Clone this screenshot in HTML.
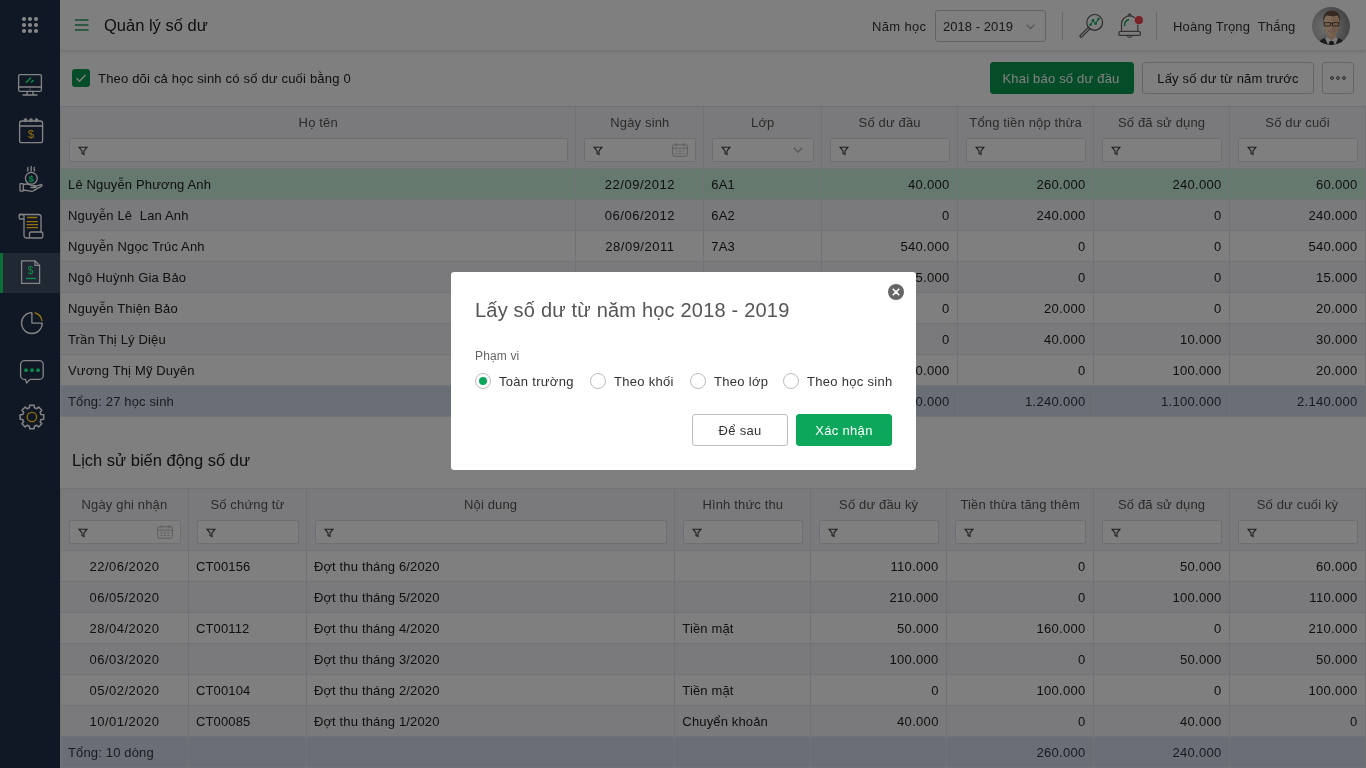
<!DOCTYPE html>
<html lang="vi">
<head>
<meta charset="utf-8">
<title>Quản lý số dư</title>
<style>
*{box-sizing:border-box;margin:0;padding:0}
html,body{width:1366px;height:768px;overflow:hidden}
body{font-family:"Liberation Sans",sans-serif;font-size:13px;color:#212121;background:#fefefe;position:relative;letter-spacing:.15px}
#side{position:absolute;left:0;top:0;width:60px;height:768px;background:#111825;z-index:50}
#side svg{position:absolute;left:0;top:0}
#side .act{position:absolute;left:0;top:253px;width:60px;height:40px;background:#202834}
#side .act:before{content:"";position:absolute;left:0;top:0;width:3px;height:40px;background:#0a6e37}
#hdr{position:absolute;left:60px;top:0;width:1306px;height:50px;background:#fff;box-shadow:0 1px 4px rgba(0,0,0,.18);z-index:5}
#hdr .ttl{position:absolute;left:44px;top:14px;font-size:16.5px;line-height:22px;color:#212121;letter-spacing:0}
#tool{position:absolute;left:60px;top:50px;width:1306px;height:56px;background:#fff}
.cb{position:absolute;left:12px;top:19px;width:18px;height:18px;border-radius:3px;background:#0b9b53}
.cbl{position:absolute;left:38px;top:20px;line-height:18px;letter-spacing:.19px}
.btn{position:absolute;top:12px;height:32px;line-height:31.500px;border-radius:3px;border:1px solid #c9ccd3;background:#fff;text-align:center;color:#212121}
.btn.g{background:#0b9b53;border-color:#0b9b53;color:#fff;text-indent:-2px;letter-spacing:.2px}
table{border-collapse:collapse;table-layout:fixed;position:absolute;left:60px}
th,td{border:1px solid #e3e5eb;height:31px;padding:0 8px 0 7px;white-space:nowrap;overflow:hidden;font-weight:400;text-align:left}
th{background:#f4f5f8;height:62px;vertical-align:top;text-align:center;color:#555;padding:8px 8px 0;position:relative}
td.r{text-align:right;letter-spacing:.3px;padding-right:7.500px}td.c{text-align:center;letter-spacing:.5px;padding:0 8px}
tr.sel td{background:#cdf2df}
tr.alt td{background:#f4f5f8}
tr.tot td{background:#d3dcee;color:#34373d}
th i{position:absolute;left:8px;right:7px;top:31px;height:24px;border:1px solid #dcdee4;background:#fff;border-radius:2px}
#sec2{position:absolute;left:60px;top:432px;width:1306px;height:336px;background:#fff}
#sec2 .st{position:absolute;left:12px;top:17px;font-size:16.5px;line-height:22px;letter-spacing:0}
svg.fn{position:absolute;left:8px;top:6.500px;width:10px;height:10px;fill:none;stroke:#3c3c3c;stroke-width:1.100}
svg.cal{position:absolute;right:7px;top:3.500px;width:16px;height:14px;fill:none;stroke:#bbb;stroke-width:1}
svg.chv{position:absolute;right:10px;top:8px;width:10px;height:6px;fill:none;stroke:#b8b8b8;stroke-width:1.600}
#ov{position:absolute;left:0;top:0;width:1366px;height:768px;background:rgba(0,0,0,.5);z-index:20}
#dlg{position:absolute;left:451px;top:272px;width:465px;height:198px;background:#fff;border-radius:3px;z-index:30;color:#444}
#dlg .dt{position:absolute;left:24px;top:24px;font-size:20px;line-height:28px;color:#555;letter-spacing:.2px}
#dlg .cls{position:absolute;left:437px;top:12px;width:16px;height:16px}
#dlg .lb{position:absolute;left:24px;top:76px;font-size:12px;line-height:16px;color:#666}
#dlg .rd{position:absolute;top:101px;width:16px;height:16px;border-radius:50%;border:1px solid #bdbdbd;background:#fff}
#dlg .rd.on:after{content:"";position:absolute;left:3px;top:3px;width:8px;height:8px;border-radius:50%;background:#0da75b}
#dlg .rl{position:absolute;top:101px;line-height:18px;color:#333;letter-spacing:.3px}
#dlg .db{position:absolute;top:142px;width:96px;height:32px;line-height:31px;text-align:center;border:1px solid #bdbdbd;border-radius:3px;background:#fff;color:#333;letter-spacing:.3px}
#dlg .db.g{background:#0da75b;border-color:#0da75b;color:#fff}
#hdr .hb{position:absolute;left:15px;top:19px;width:14px;height:12px}
#hdr .ny{position:absolute;left:812px;top:17px;line-height:20px;letter-spacing:.35px;color:#333}
#hdr .sl{position:absolute;left:875px;top:10px;width:111px;height:32px;border:1px solid #c6c6c8;border-radius:3px;line-height:32px;padding-left:7px;color:#333;letter-spacing:.05px}
#hdr .sl svg{position:absolute;right:10px;top:12.500px;width:9px;height:5.500px;fill:none;stroke:#b0b0b0;stroke-width:1.500}
#hdr .sp{position:absolute;top:12px;width:1px;height:28px;background:#d0d0d0}
#hdr .ic1{position:absolute;left:1018px;top:12px;width:26px;height:26px}
#hdr .ic2{position:absolute;left:1056px;top:11px;width:26px;height:28px}
#hdr .un{position:absolute;left:1113px;top:17px;line-height:20px;letter-spacing:.18px;color:#333}
#hdr .av{position:absolute;left:1252px;top:7px;width:38px;height:38px}
.cb svg{position:absolute;left:0;top:0;width:18px;height:18px}
svg{overflow:visible}
body>*{will-change:transform}
</style>
</head>
<body>
<div id="side"><div class="act"></div><svg width="60" height="768" viewBox="0 0 60 768" fill="none" stroke="#858585" stroke-width="1.300" stroke-linejoin="round" stroke-linecap="round">
<g fill="#878787" stroke="none"><circle cx="24" cy="19" r="2.100"/><circle cx="30" cy="19" r="2.100"/><circle cx="36" cy="19" r="2.100"/><circle cx="24" cy="25" r="2.100"/><circle cx="30" cy="25" r="2.100"/><circle cx="36" cy="25" r="2.100"/><circle cx="24" cy="31" r="2.100"/><circle cx="30" cy="31" r="2.100"/><circle cx="36" cy="31" r="2.100"/></g>
<rect x="18.600" y="74.600" width="22.800" height="16.800" rx="1.500"/><path d="M18.600 87h22.800M27.600 91.400l-1 3.500M32.400 91.400l1 3.500M23 95h14"/><circle cx="30" cy="89.200" r=".600" fill="#858585" stroke="none"/>
<path d="M26 82.800l5-5.200M31 82.500l2.600-2.400" stroke="#0a8c4a" stroke-width="1.500" stroke-linecap="butt"/>
<rect x="19.600" y="121" width="23" height="21.600" rx="2.200"/><path d="M19.600 126h23"/><circle cx="25.500" cy="120.300" r="1.300"/><circle cx="31" cy="120.300" r="1.300"/><circle cx="36.500" cy="120.300" r="1.300"/>
<text x="31" y="138" font-family="Liberation Sans,sans-serif" font-size="11.500" text-anchor="middle" fill="#94720f" stroke="none">$</text>
<path d="M27.800 167.500v3.600M31.200 166.400v4.800M34.300 167.500v3.600"/><circle cx="31.300" cy="178.300" r="5.900"/>
<text x="31.300" y="181.800" font-family="Liberation Sans,sans-serif" font-size="9.500" font-weight="700" text-anchor="middle" fill="#0a8c4a" stroke="none">$</text>
<rect x="20" y="183.600" width="3.300" height="7.600" rx=".500"/><path d="M23.300 184.600c2-.700 3.800-.900 5.600-.100l2.600 1.200h3.600c1.300 0 1.300 1.900 0 1.900h-4.300M33.500 187.200l7.200-2.600c1.200-.400 1.800.900.800 1.500l-8.200 4.800c-.800.400-1.600.500-2.600.300l-7.400-1.200"/>
<path d="M24 219v16.500a2.500 2.500 0 0 0 2.500 2.500h3M19.200 214.500h19.300a2.500 2.500 0 0 1 2.500 2.500v15"/><rect x="19.200" y="214.500" width="4.800" height="4.500" rx="1"/><rect x="29.500" y="232" width="13.300" height="6" rx="1.500"/>
<path d="M27.200 217.500h10M26.600 221.600h11.400M26.600 224.600h11.400M26.600 227.600h11.400" stroke="#94720f" stroke-linecap="butt"/>
<path d="M21.600 260.800h13.400l4.600 4.600v18h-18zM35 260.800v4.600h4.600"/>
<text x="30.600" y="274.300" font-family="Liberation Sans,sans-serif" font-size="10.500" text-anchor="middle" fill="#0a8c4a" stroke="none">$</text>
<path d="M26 278.500h10" stroke="#0a8c4a" stroke-linecap="butt"/>
<path d="M31.900 312.700a10.400 10.400 0 1 0 10.400 10.400h-10.400z"/><path d="M35.200 313a9.300 9.300 0 0 1 6.700 7.500" stroke="#94720f"/>
<path d="M24.600 360.600h14.600a4 4 0 0 1 4 4v10.800a4 4 0 0 1-4 4h-9.200l-3.400 3.600-1-3.600h-1a4 4 0 0 1-4-4v-10.800a4 4 0 0 1 4-4z"/>
<g fill="#0a8c4a" stroke="none"><circle cx="26" cy="370.200" r="1.900"/><circle cx="32" cy="370.200" r="1.900"/><circle cx="38" cy="370.200" r="1.900"/></g>
<path d="M29.37 407.84L29.63 405.22 L34.17 405.22 L34.43 407.84A9.5 9.5 0 0 1 36.58 408.73L38.63 407.06 L41.84 410.27 L40.17 412.32A9.5 9.5 0 0 1 41.06 414.47L43.68 414.73 L43.68 419.27 L41.06 419.53A9.5 9.5 0 0 1 40.17 421.68L41.84 423.73 L38.63 426.94 L36.58 425.27A9.5 9.5 0 0 1 34.43 426.16L34.17 428.78 L29.63 428.78 L29.37 426.16A9.5 9.5 0 0 1 27.22 425.27L25.17 426.94 L21.96 423.73 L23.63 421.68A9.5 9.5 0 0 1 22.74 419.53L20.12 419.27 L20.12 414.73 L22.74 414.47A9.5 9.5 0 0 1 23.63 412.32L21.96 410.27 L25.17 407.06 L27.22 408.73A9.5 9.5 0 0 1 29.37 407.84Z" stroke-width="1.500"/><circle cx="31.900" cy="417" r="4.700" stroke="#94720f"/>
</svg></div>
<div id="hdr"><svg class="hb" viewBox="0 0 14 12"><path d="M0 1h13.5M0 6h13.5M0 11h13.5" stroke="#2a9a5e" stroke-width="1.6" fill="none"/></svg><div class="ttl">Quản lý số dư</div>
<div class="ny">Năm học</div>
<div class="sl">2018 - 2019<svg viewBox="0 0 10 6"><path d="M.7.7L5 5l4.3-4.3"/></svg></div>
<div class="sp" style="left:1002px"></div>
<svg class="ic1" viewBox="0 0 26 26"><circle cx="16.700" cy="10.400" r="7.900" fill="none" stroke="#555" stroke-width="1.200"/><path d="M10.300 15.300L2.300 23.300a1.100 1.100 0 0 0 1.600 1.600l8-8" fill="none" stroke="#555" stroke-width="1.200" stroke-linejoin="round"/><path d="M12.600 12.800l2.400-4.600 2.600 3.600 2.800-4.800" fill="none" stroke="#12a85c" stroke-width="1.100"/><circle cx="12.600" cy="12.800" r="1.200" fill="#12a85c"/><circle cx="15" cy="8.200" r="1.200" fill="#12a85c"/><circle cx="17.600" cy="11.800" r="1.200" fill="#12a85c"/><circle cx="20.400" cy="7" r="1.200" fill="#12a85c"/></svg>
<svg class="ic2" viewBox="0 0 26 28"><path d="M11.700 5.200L13.650 2.600l1.950 2.600" fill="none" stroke="#666" stroke-width="1.100" stroke-linejoin="round"/><path d="M5.500 20.400V13a8.150 8.150 0 0 1 16.300 0v7.400" fill="none" stroke="#666" stroke-width="1.200"/><rect x="2.800" y="20.400" width="21.700" height="4" rx="2" fill="none" stroke="#666" stroke-width="1.200"/><path d="M11.200 24.400a2.500 2.500 0 0 0 4.900 0" fill="none" stroke="#666" stroke-width="1.200"/><path d="M8.600 14.400c0-3 1.600-5 4-5.600" fill="none" stroke="#12a85c" stroke-width="1.400" stroke-linecap="round"/><circle cx="22.900" cy="9.200" r="4.800" fill="#fff"/><circle cx="22.900" cy="9.200" r="4.100" fill="#f2454f"/></svg>
<div class="sp" style="left:1096px"></div>
<div class="un">Hoàng Trọng &nbsp;Thắng</div>
<svg class="av" viewBox="0 0 38 38"><defs><clipPath id="avc"><circle cx="19" cy="19" r="19"/></clipPath><radialGradient id="avg" cx=".32" cy=".55" r=".75"><stop offset="0" stop-color="#d6d6d6"/><stop offset=".55" stop-color="#b0b0b0"/><stop offset="1" stop-color="#7e7e7e"/></radialGradient><filter id="avb" x="-10%" y="-10%" width="120%" height="120%"><feGaussianBlur stdDeviation=".55"/></filter></defs><g clip-path="url(#avc)"><rect width="38" height="38" fill="url(#avg)"/><g filter="url(#avb)"><path d="M6 38c.500-3.500 2.500-5.500 6.500-7l4-1.800h6l4 1.800c4 1.500 6 3.500 6.500 7z" fill="#3a3a3c"/><path d="M13 31.500l3.200-3h6.600l3.200 3-2.800 6.500h-7z" fill="#f4f4f4"/><path d="M17.300 34.800l2.200-1.300 2.200 1.300 1 3.200h-6.400z" fill="#3b3530"/><path d="M15.500 24h8v6.500l-4 2.800-4-2.800z" fill="#e9b898"/><path d="M11.600 14.500c0-5 3.200-7.500 7.800-7.500s8 2.500 8 7.500c0 2-.200 4.200-.800 6.500-.800 3.800-3.600 8.600-7.100 8.600s-6.300-4.800-7.100-8.600c-.600-2.300-.800-4.500-.800-6.500z" fill="#f6cfae"/><path d="M19.500 9c4 0 7.900 2 7.900 5.500 0 2-.200 4.200-.800 6.500-.800 3.800-3.600 8.600-7.100 8.600z" fill="#d9a582" opacity=".55"/><path d="M11.300 15.500c-.900-7.500 2.500-11.900 8.600-11.900 5.800 0 9.400 4.400 7.900 11.900-.300-3-1-5.200-2.200-6.900-3 .900-8.400.800-11.200-.300-1.600 1.800-2.600 4.200-3.100 7.200z" fill="#6a5242"/><path d="M12.300 15.600h6.200v3.400h-6.200zM20.500 15.600h6.200v3.400h-6.200zM18.500 16.600h2M11.400 16h1M26.700 16h1" fill="#d8b094" fill-opacity=".35" stroke="#3a2c24" stroke-width=".750"/><path d="M15.800 22.800c2 1.800 5.400 1.800 7.400 0-.800 2.800-6.600 2.800-7.400 0z" fill="#fff" stroke="#b07860" stroke-width=".4"/></g></g></svg>
</div>
<div id="tool"><div class="cb"><svg viewBox="0 0 18 18"><path d="M4.500 9.200l3 3 6-6.200" fill="none" stroke="#fff" stroke-width="1.500"/></svg></div><div class="cbl">Theo dõi cả học sinh có số dư cuối bằng 0</div>
<div class="btn g" style="left:930px;width:144px">Khai báo số dư đầu</div>
<div class="btn" style="left:1082px;width:172px">Lấy số dư từ năm trước</div>
<div class="btn" style="left:1262px;width:32px"><svg viewBox="0 0 16 4" style="width:16px;height:4px;position:absolute;left:7px;top:13px"><circle cx="2" cy="2" r="1.400" fill="none" stroke="#444" stroke-width="1"/><circle cx="8" cy="2" r="1.400" fill="none" stroke="#444" stroke-width="1"/><circle cx="14" cy="2" r="1.400" fill="none" stroke="#444" stroke-width="1"/></svg></div>
</div>
<table id="t1" style="top:106px"><colgroup><col style="width:516px"><col style="width:128px"><col style="width:118px"><col style="width:136px"><col style="width:136px"><col style="width:136px"><col style="width:136px"></colgroup>
<tr><th>Họ tên<i><svg class="fn" viewBox="0 0 10 10"><path d="M1 1.2h8L6 5v3.6L4 7.4V5z"/></svg></i></th><th>Ngày sinh<i><svg class="fn" viewBox="0 0 10 10"><path d="M1 1.2h8L6 5v3.6L4 7.4V5z"/></svg><svg class="cal" viewBox="0 0 16 14"><rect x=".6" y="1.8" width="14.8" height="11.4" rx="1.5"/><path d="M.6 5.2h14.8M4 .3v3M12 .3v3M3.5 8h2M7 8h2M10.5 8h2M3.5 10.5h2M7 10.5h2M10.5 10.5h2"/></svg></i></th><th>Lớp<i><svg class="fn" viewBox="0 0 10 10"><path d="M1 1.2h8L6 5v3.6L4 7.4V5z"/></svg><svg class="chv" viewBox="0 0 10 6"><path d="M.7.7L5 5l4.3-4.3"/></svg></i></th><th>Số dư đầu<i><svg class="fn" viewBox="0 0 10 10"><path d="M1 1.2h8L6 5v3.6L4 7.4V5z"/></svg></i></th><th>Tổng tiền nộp thừa<i><svg class="fn" viewBox="0 0 10 10"><path d="M1 1.2h8L6 5v3.6L4 7.4V5z"/></svg></i></th><th>Số đã sử dụng<i><svg class="fn" viewBox="0 0 10 10"><path d="M1 1.2h8L6 5v3.6L4 7.4V5z"/></svg></i></th><th>Số dư cuối<i><svg class="fn" viewBox="0 0 10 10"><path d="M1 1.2h8L6 5v3.6L4 7.4V5z"/></svg></i></th></tr>
<tr class="sel"><td>Lê Nguyễn Phương Anh</td><td class="c">22/09/2012</td><td>6A1</td><td class="r">40.000</td><td class="r">260.000</td><td class="r">240.000</td><td class="r">60.000</td></tr>
<tr class="alt"><td>Nguyễn Lê &nbsp;Lan Anh</td><td class="c">06/06/2012</td><td>6A2</td><td class="r">0</td><td class="r">240.000</td><td class="r">0</td><td class="r">240.000</td></tr>
<tr><td>Nguyễn Ngọc Trúc Anh</td><td class="c">28/09/2011</td><td>7A3</td><td class="r">540.000</td><td class="r">0</td><td class="r">0</td><td class="r">540.000</td></tr>
<tr class="alt"><td>Ngô Huỳnh Gia Bảo</td><td class="c">12/03/2011</td><td>7A1</td><td class="r">15.000</td><td class="r">0</td><td class="r">0</td><td class="r">15.000</td></tr>
<tr><td>Nguyễn Thiện Bảo</td><td class="c">05/11/2010</td><td>8A2</td><td class="r">0</td><td class="r">20.000</td><td class="r">0</td><td class="r">20.000</td></tr>
<tr class="alt"><td>Trần Thị Lý Diệu</td><td class="c">19/07/2010</td><td>8A1</td><td class="r">0</td><td class="r">40.000</td><td class="r">10.000</td><td class="r">30.000</td></tr>
<tr><td>Vương Thị Mỹ Duyên</td><td class="c">02/01/2009</td><td>9A4</td><td class="r">120.000</td><td class="r">0</td><td class="r">100.000</td><td class="r">20.000</td></tr>
<tr class="tot"><td>Tổng: 27 học sinh</td><td></td><td></td><td class="r">2.000.000</td><td class="r">1.240.000</td><td class="r">1.100.000</td><td class="r">2.140.000</td></tr>
</table>
<div id="sec2"><div class="st">Lịch sử biến động số dư</div></div>
<table id="t2" style="top:488px"><colgroup><col style="width:128px"><col style="width:118px"><col style="width:369px"><col style="width:136px"><col style="width:136px"><col style="width:147px"><col style="width:136px"><col style="width:136px"></colgroup>
<tr><th>Ngày ghi nhận<i><svg class="fn" viewBox="0 0 10 10"><path d="M1 1.2h8L6 5v3.6L4 7.4V5z"/></svg><svg class="cal" viewBox="0 0 16 14"><rect x=".6" y="1.8" width="14.8" height="11.4" rx="1.5"/><path d="M.6 5.2h14.8M4 .3v3M12 .3v3M3.5 8h2M7 8h2M10.5 8h2M3.5 10.5h2M7 10.5h2M10.5 10.5h2"/></svg></i></th><th>Số chứng từ<i><svg class="fn" viewBox="0 0 10 10"><path d="M1 1.2h8L6 5v3.6L4 7.4V5z"/></svg></i></th><th>Nội dung<i><svg class="fn" viewBox="0 0 10 10"><path d="M1 1.2h8L6 5v3.6L4 7.4V5z"/></svg></i></th><th>Hình thức thu<i><svg class="fn" viewBox="0 0 10 10"><path d="M1 1.2h8L6 5v3.6L4 7.4V5z"/></svg></i></th><th>Số dư đầu kỳ<i><svg class="fn" viewBox="0 0 10 10"><path d="M1 1.2h8L6 5v3.6L4 7.4V5z"/></svg></i></th><th>Tiền thừa tăng thêm<i><svg class="fn" viewBox="0 0 10 10"><path d="M1 1.2h8L6 5v3.6L4 7.4V5z"/></svg></i></th><th>Số đã sử dụng<i><svg class="fn" viewBox="0 0 10 10"><path d="M1 1.2h8L6 5v3.6L4 7.4V5z"/></svg></i></th><th>Số dư cuối kỳ<i><svg class="fn" viewBox="0 0 10 10"><path d="M1 1.2h8L6 5v3.6L4 7.4V5z"/></svg></i></th></tr>
<tr><td class="c">22/06/2020</td><td>CT00156</td><td>Đợt thu tháng 6/2020</td><td></td><td class="r">110.000</td><td class="r">0</td><td class="r">50.000</td><td class="r">60.000</td></tr>
<tr class="alt"><td class="c">06/05/2020</td><td></td><td>Đợt thu tháng 5/2020</td><td></td><td class="r">210.000</td><td class="r">0</td><td class="r">100.000</td><td class="r">110.000</td></tr>
<tr><td class="c">28/04/2020</td><td>CT00112</td><td>Đợt thu tháng 4/2020</td><td>Tiền mặt</td><td class="r">50.000</td><td class="r">160.000</td><td class="r">0</td><td class="r">210.000</td></tr>
<tr class="alt"><td class="c">06/03/2020</td><td></td><td>Đợt thu tháng 3/2020</td><td></td><td class="r">100.000</td><td class="r">0</td><td class="r">50.000</td><td class="r">50.000</td></tr>
<tr><td class="c">05/02/2020</td><td>CT00104</td><td>Đợt thu tháng 2/2020</td><td>Tiền mặt</td><td class="r">0</td><td class="r">100.000</td><td class="r">0</td><td class="r">100.000</td></tr>
<tr class="alt"><td class="c">10/01/2020</td><td>CT00085</td><td>Đợt thu tháng 1/2020</td><td>Chuyển khoản</td><td class="r">40.000</td><td class="r">0</td><td class="r">40.000</td><td class="r">0</td></tr>
<tr class="tot"><td>Tổng: 10 dòng</td><td></td><td></td><td></td><td></td><td class="r">260.000</td><td class="r">240.000</td><td></td></tr>
</table>
<div id="ov"></div>
<div id="dlg">
<div class="dt">Lấy số dư từ năm học 2018 - 2019</div>
<svg class="cls" viewBox="0 0 16 16"><circle cx="8" cy="8" r="8" fill="#666"/><path d="M5.2 5.2l5.6 5.6M10.8 5.2l-5.6 5.6" stroke="#fff" stroke-width="1.6" stroke-linecap="round"/></svg>
<div class="lb">Phạm vi</div>
<div class="rd on" style="left:24px"></div><div class="rl" style="left:48px">Toàn trường</div>
<div class="rd" style="left:139px"></div><div class="rl" style="left:163px">Theo khối</div>
<div class="rd" style="left:239px"></div><div class="rl" style="left:263px">Theo lớp</div>
<div class="rd" style="left:332px"></div><div class="rl" style="left:356px">Theo học sinh</div>
<div class="db" style="left:241px">Để sau</div>
<div class="db g" style="left:345px">Xác nhận</div>
</div>
</body>
</html>
